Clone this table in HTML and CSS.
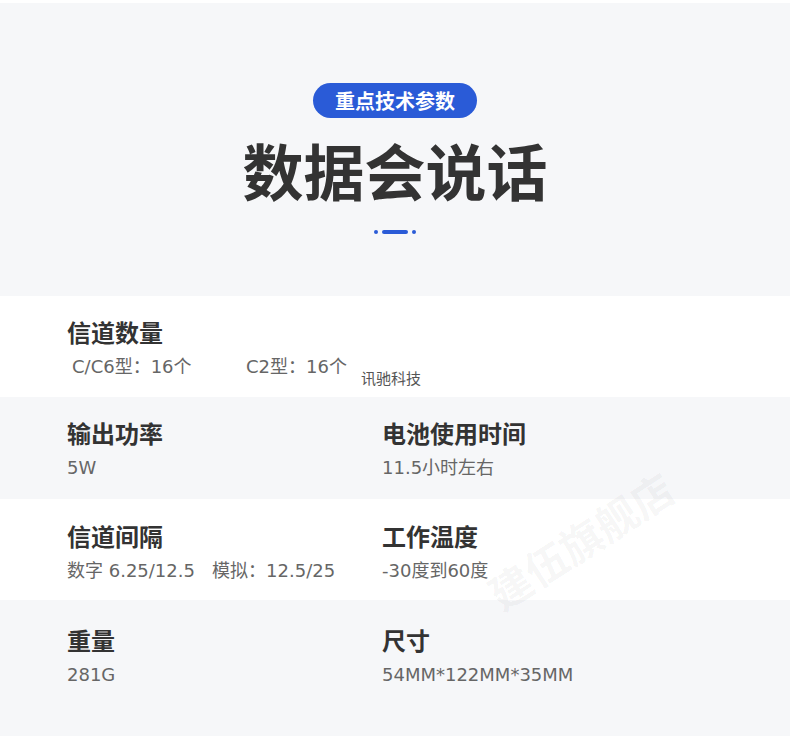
FILE: index.html
```html
<!DOCTYPE html>
<html>
<head>
    <title>重点技术参数</title>
    <link rel="stylesheet" href="styles.css">
</head>
<body>
    <div class="page">
        <div class="header">
            <div class="pill">重点技术参数</div>
            <h1>数据会说话</h1>
            <div class="divider">
                <span class="dot"></span>
                <span class="dash"></span>
                <span class="dot"></span>
            </div>
        </div>

        <div class="spec-list">
            <div class="spec-row white">
                <div class="spec">
                    <div class="label">信道数量</div>
                    <div class="value channels">
                        <span class="ch-a">C/C6型：16个</span>
                        <span class="ch-b">C2型：16个</span>
                        <span class="brand">讯驰科技</span>
                    </div>
                </div>
            </div>

            <div class="spec-row gray">
                <div class="spec">
                    <div class="label">输出功率</div>
                    <div class="value">5W</div>
                </div>
                <div class="spec">
                    <div class="label">电池使用时间</div>
                    <div class="value">11.5小时左右</div>
                </div>
            </div>

            <div class="spec-row white third">
                <div class="spec">
                    <div class="label">信道间隔</div>
                    <div class="value">数字 6.25/12.5&nbsp;&nbsp;&nbsp;模拟：12.5/25</div>
                </div>
                <div class="spec">
                    <div class="label">工作温度</div>
                    <div class="value">-30度到60度</div>
                </div>
            </div>

            <div class="spec-row gray last">
                <div class="spec">
                    <div class="label">重量</div>
                    <div class="value">281G</div>
                </div>
                <div class="spec">
                    <div class="label">尺寸</div>
                    <div class="value">54MM*122MM*35MM</div>
                </div>
            </div>

            <div class="watermark">建伍旗舰店</div>
        </div>
    </div>
</body>
</html>
```

FILE: styles.css
```css
body {
    margin: 0;
    background: #ffffff;
    font-family: "DejaVu Sans", "Noto Sans CJK SC", sans-serif;
    color: #333;
}

.page {
    width: 790px;
    padding-top: 3px;
}

/* Header block */
.header {
    background: #f6f7f9;
    height: 293px;
    padding-top: 80px;
    box-sizing: border-box;
    display: flex;
    flex-direction: column;
    align-items: center;
}

.pill {
    height: 35px;
    line-height: 35px;
    padding: 0 22px;
    border-radius: 18px;
    background: #2a5bd7;
    color: #fff;
    font-family: "Noto Sans CJK SC", sans-serif;
    font-weight: bold;
    font-size: 20px;
}

h1 {
    margin: 21px 0 0;
    font-family: "Noto Sans CJK SC", sans-serif;
    font-size: 61px;
    line-height: 61px;
    font-weight: bold;
    color: #333;
}

.divider {
    margin-top: 30px;
    display: flex;
    align-items: center;
    gap: 4px;
}

.dot {
    width: 4px;
    height: 4px;
    border-radius: 50%;
    background: #2a5bd7;
}

.dash {
    width: 26px;
    height: 4px;
    border-radius: 2px;
    background: #2a5bd7;
}

/* Spec rows */
.spec-list {
    position: relative;
    overflow: hidden;
}

.spec-row {
    height: 102px;
    box-sizing: border-box;
    padding: 22px 0 0 67px;
    display: grid;
    grid-template-columns: 315px 1fr;
    align-content: start;
}

.spec-row.white {
    background: #fff;
    height: 101px;
}

.spec-row.gray {
    background: #f6f7f9;
}

.spec-row.third {
    padding-top: 23px;
}

.spec-row.last {
    height: 136px;
    padding-top: 26px;
}

.label {
    font-family: "Noto Sans CJK SC", sans-serif;
    font-weight: bold;
    font-size: 24px;
    line-height: 28px;
    color: #333;
}

.value {
    margin-top: 9px;
    font-size: 18px;
    line-height: 24px;
    color: #666;
}

.channels {
    display: flex;
    align-items: flex-start;
}

.channels span {
    flex-shrink: 0;
    white-space: nowrap;
}

.ch-a {
    margin-left: 5px;
    width: 174px;
}

.ch-b {
    width: 115px;
}

.brand {
    font-size: 15px;
    color: #555;
    margin-top: 12px;
}

.watermark {
    position: absolute;
    left: 475px;
    top: 213px;
    font-family: "Noto Sans CJK SC", sans-serif;
    font-weight: bold;
    font-size: 42px;
    color: rgba(0, 0, 0, 0.045);
    transform: rotate(-33deg);
    white-space: nowrap;
    pointer-events: none;
}
```
